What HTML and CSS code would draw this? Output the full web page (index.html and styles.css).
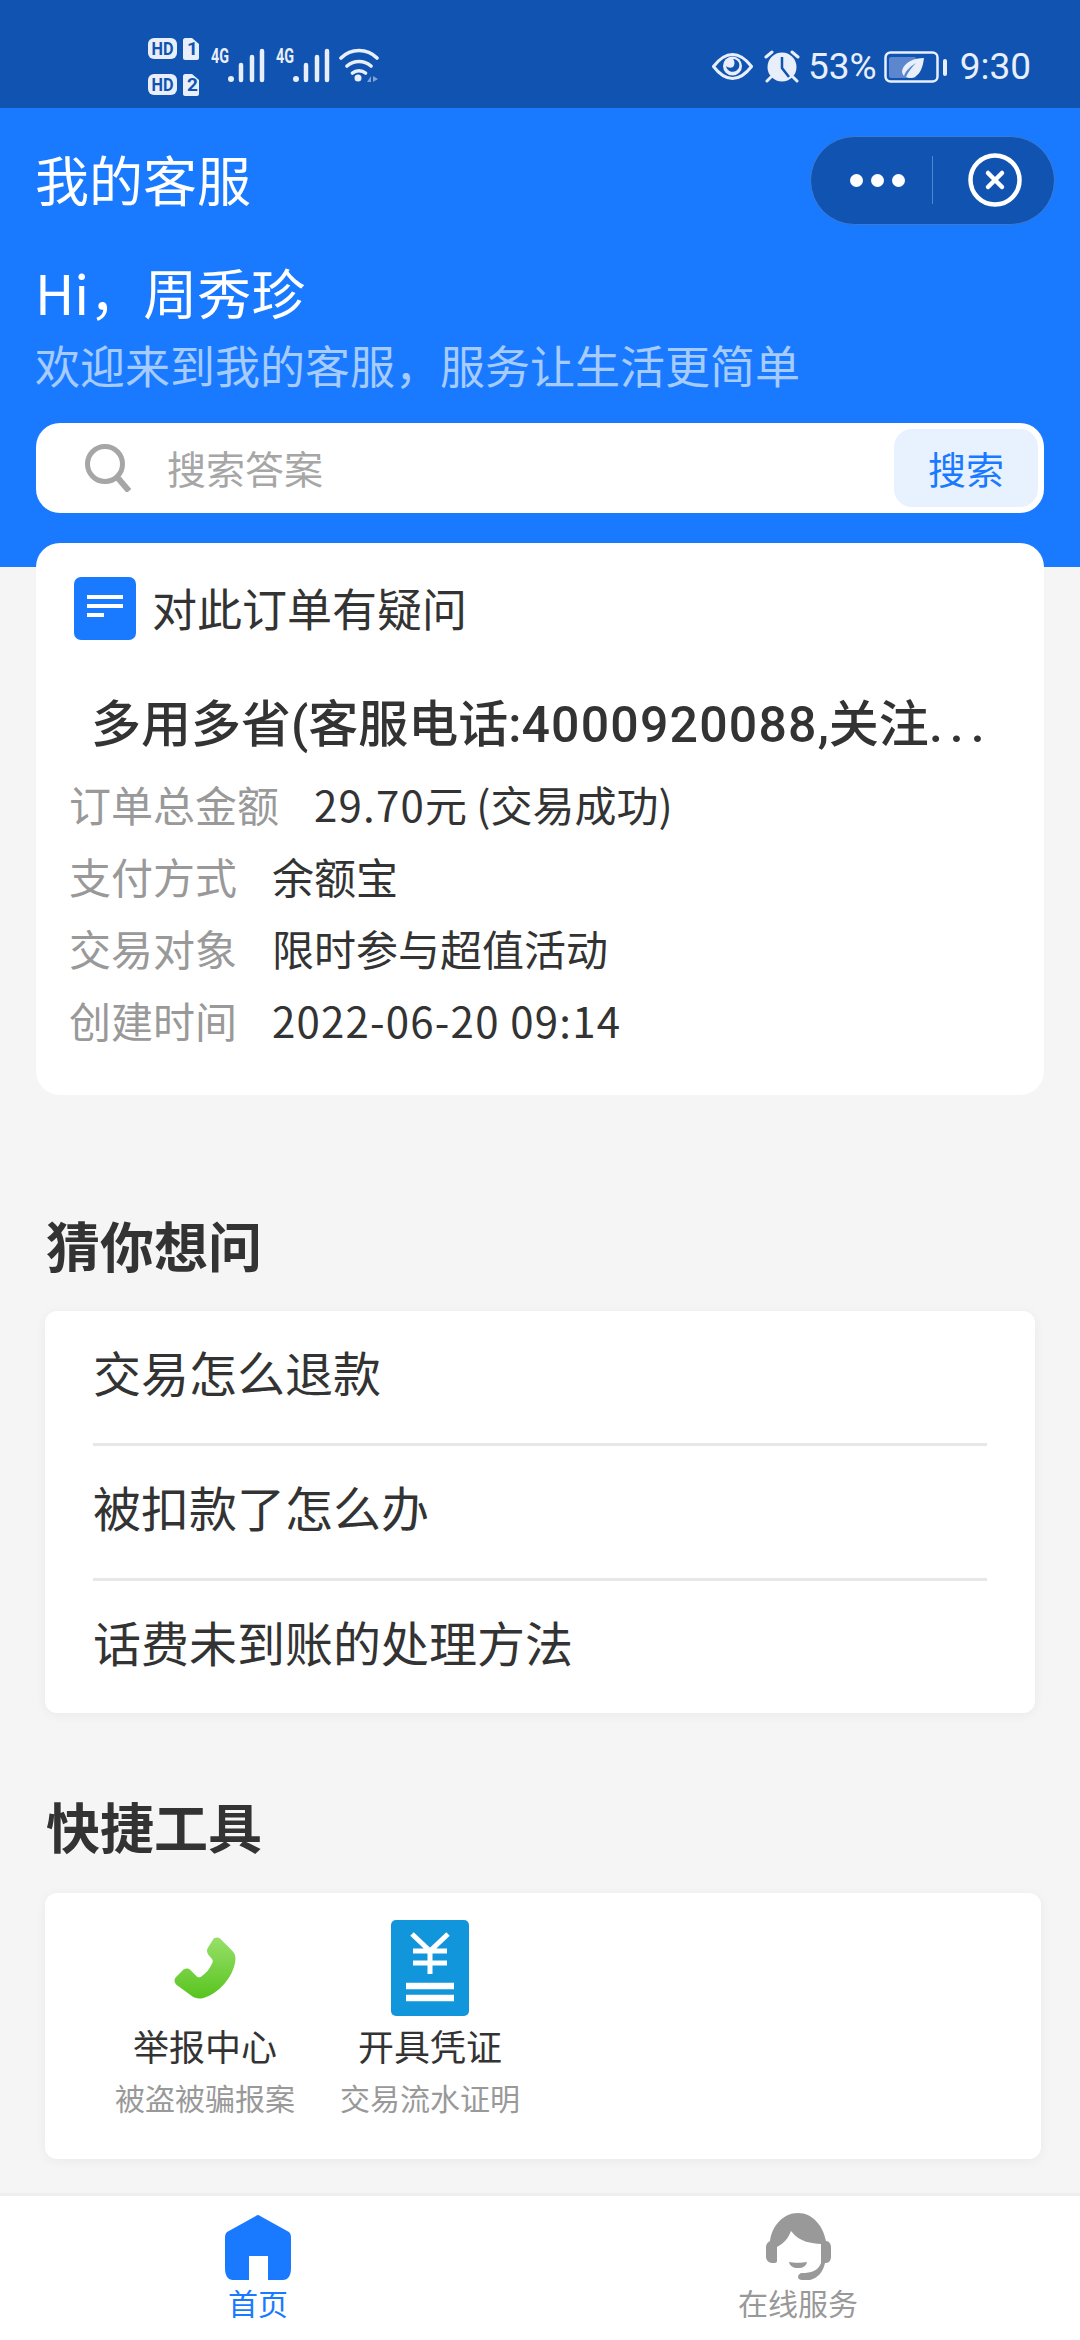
FILE: index.html
```html
<!DOCTYPE html>
<html lang="zh-CN">
<head>
  <meta charset="UTF-8">
  <meta name="viewport" content="width=device-width, initial-scale=1.0">
  <title>我的客服</title>
  <link rel="stylesheet" href="styles.css">
</head>
<body>
<div class="page">
  <div class="status-bar">
    <div class="status-left">
      <svg class="sim-icons" width="52" height="66" viewBox="0 -4 52 66">
        <rect x="0" y="0" width="29" height="21" rx="6" fill="#e8effa"/>
        <text x="3.5" y="16.500" class="sim-text" textLength="22" lengthAdjust="spacingAndGlyphs">HD</text>
        <path d="M37 0h7l7 6v14c0 1-1 2-2 2H37c-1 0-2-1-2-2V2c0-1 1-2 2-2z" fill="#e8effa"/>
        <text x="39" y="17" class="sim-text">1</text>
        <rect x="0" y="36" width="29" height="21" rx="6" fill="#e8effa"/>
        <text x="3.5" y="52.500" class="sim-text" textLength="22" lengthAdjust="spacingAndGlyphs">HD</text>
        <path d="M37 36h7l7 6v14c0 1-1 2-2 2H37c-1 0-2-1-2-2V38c0-1 1-2 2-2z" fill="#e8effa"/>
        <text x="39" y="53" class="sim-text">2</text>
      </svg>
      <svg class="signal" width="55" height="40" viewBox="0 -4 55 40">
        <text x="0" y="15" class="net-text" textLength="18" lengthAdjust="spacingAndGlyphs">4G</text>
        <circle cx="20" cy="31" r="3" fill="#e8effa"/>
        <path d="M30 17v15M41 9v23M51 3v29" stroke="#e8effa" stroke-width="4.500" stroke-linecap="round" fill="none"/>
      </svg>
      <svg class="signal" width="55" height="40" viewBox="0 -4 55 40">
        <text x="0" y="15" class="net-text" textLength="18" lengthAdjust="spacingAndGlyphs">4G</text>
        <circle cx="20" cy="31" r="3" fill="#e8effa"/>
        <path d="M30 17v15M41 9v23M51 3v29" stroke="#e8effa" stroke-width="4.500" stroke-linecap="round" fill="none"/>
      </svg>
      <svg class="wifi" width="42" height="35" viewBox="0 0 42 35">
        <path d="M2 10c10-10 26-10 36 0M8 18c7-6 17-6 24 0M13.500 25c3.500-3 9.500-3 13 0" stroke="#e8effa" stroke-width="3.600" stroke-linecap="round" fill="none"/>
        <circle cx="19" cy="30" r="3.500" fill="#e8effa"/>
        <path d="M32 28v6h-4zM34 28v6l5-3z" fill="#7fa3d8"/>
      </svg>
    </div>
    <div class="status-right">
      <svg class="st-eye" width="41" height="27" viewBox="0 0 41 27">
        <path d="M1.500 13.500C8 5 14 1.500 20.500 1.500S33 5 39.500 13.500C33 22 27 25.500 20.500 25.500S8 22 1.500 13.500z" fill="none" stroke="#e8effa" stroke-width="3"/>
        <circle cx="20.500" cy="13" r="9.500" fill="#e8effa"/>
        <path d="M21 6c2 2 2 6 0 8-2 1-5 1-7-1 1 5 6 7 10 5 3-2 4-5 3-8-1-2-3-4-6-4z" fill="#1153b0"/>
      </svg>
      <svg class="st-alarm" width="36" height="33" viewBox="0 0 36 33">
        <circle cx="18" cy="17" r="14.500" fill="#e8effa"/>
        <path d="M18 7v11l7 9" stroke="#1153b0" stroke-width="2.500" fill="none"/>
        <path d="M2 7l6-5M34 7l-6-5M3 31l4-4M33 31l-4-4" stroke="#e8effa" stroke-width="3" stroke-linecap="round"/>
      </svg>
      <span class="battery-pct">53%</span>
      <svg class="st-battery" width="63" height="32" viewBox="0 0 63 32">
        <rect x="1.500" y="1.500" width="52" height="29" rx="5" fill="none" stroke="#e8effa" stroke-width="2.500"/>
        <rect x="5" y="6" width="27" height="21" rx="2" fill="#5c87cf"/>
        <path d="M40 7C30 7 20 11 18 20c0 2 1 4 2 5 2-6 7-10 12-13-4 4-8 9-10 14 2 1 4 1 6 1 8-2 11-11 12-20z" fill="#e8effa"/>
        <rect x="59" y="8" width="4" height="17" rx="2" fill="#e8effa"/>
      </svg>
      <span class="clock">9:30</span>
    </div>
  </div>

  <div class="hero">
    <div class="title-row">
      <div class="app-title">我的客服</div>
      <div class="capsule">
        <div class="capsule-dots"><i></i><i></i><i></i></div>
        <div class="capsule-line"></div>
        <svg width="54" height="54" viewBox="0 0 54 54">
          <circle cx="27" cy="27" r="24.500" fill="none" stroke="#fff" stroke-width="4.500"/>
          <path d="M20 20l14 14M34 20L20 34" stroke="#fff" stroke-width="4.500" stroke-linecap="round"/>
        </svg>
      </div>
    </div>
    <div class="greeting">Hi，周秀珍</div>
    <div class="welcome">欢迎来到我的客服，服务让生活更简单</div>
    <div class="search-box">
      <svg class="search-icon" width="48" height="48" viewBox="0 0 48 48">
        <circle cx="21" cy="20" r="17.500" fill="none" stroke="#a6a6a6" stroke-width="5"/>
        <path d="M33 33l12 14" stroke="#a6a6a6" stroke-width="6"/>
      </svg>
      <span class="search-hint">搜索答案</span>
      <span class="search-btn">搜索</span>
    </div>
  </div>

  <div class="order-card">
    <div class="order-head">
      <span class="doc-icon"><i class="l1"></i><i class="l1"></i><i class="l2"></i></span>
      <span>对此订单有疑问</span>
    </div>
    <div class="order-name">多用多省(客服电话:<span class="num">4000920088</span>,关注<span class="dots">...</span></div>
    <div class="order-row first"><span class="order-label">订单总金额</span><span><span class="num">29.70</span>元 (交易成功)</span></div>
    <div class="order-row"><span class="order-label">支付方式</span><span>余额宝</span></div>
    <div class="order-row"><span class="order-label">交易对象</span><span>限时参与超值活动</span></div>
    <div class="order-row"><span class="order-label">创建时间</span><span class="num">2022-06-20 09:14</span></div>
  </div>

  <h2 class="section-title ask-title">猜你想问</h2>
  <div class="ask-list">
    <div class="ask-item">交易怎么退款</div>
    <div class="ask-item">被扣款了怎么办</div>
    <div class="ask-item">话费未到账的处理方法</div>
  </div>

  <h2 class="section-title tool-title">快捷工具</h2>
  <div class="tool-card">
    <div class="tool">
      <div class="tool-icon">
        <svg width="62" height="62" viewBox="0 0 78 78">
          <defs>
            <linearGradient id="phone" x1="0" y1="0" x2="0" y2="1">
              <stop offset="0" stop-color="#98e06a"/>
              <stop offset="1" stop-color="#58c41e"/>
            </linearGradient>
          </defs>
          <path d="M50 2c3-2 6-2 8 0l15 15c4 4 5 8 4 14-3 19-20 40-41 46-6 1-10 0-14-3L3 60c-3-3-3-6-1-9l10-10c3-2 6-2 8 0l9 9c2 1 3 1 5 0 6-4 11-10 14-17 1-2 1-3 0-5l-5-6c-2-3-2-6 0-9z" fill="url(#phone)"/>
        </svg>
      </div>
      <div class="tool-name">举报中心</div>
      <div class="tool-desc">被盗被骗报案</div>
    </div>
    <div class="tool">
      <div class="tool-icon">
        <svg width="78" height="96" viewBox="0 0 78 96">
          <rect x="0" y="0" width="78" height="96" rx="5" fill="#1296db"/>
          <path d="M21 14l18 17 18-17M39 31v23M22 31h34M22 43h34" stroke="#fff" stroke-width="5" fill="none"/>
          <path d="M15 66h48M15 78h48" stroke="#fff" stroke-width="6.500"/>
        </svg>
      </div>
      <div class="tool-name">开具凭证</div>
      <div class="tool-desc">交易流水证明</div>
    </div>
  </div>

  <div class="tab-bar">
    <div class="tab active">
      <svg width="66" height="65" viewBox="0 0 66 65">
        <path d="M33 0c1 0 2 .5 3 1.500L64 17c1.500 1.500 2 3 2 6v30c0 8-3 12-8 12H43V41H24v24H8c-5 0-8-4-8-12V23c0-3 .5-4.500 2-6L30 1.500C31 .5 32 0 33 0z" fill="#1a7aff"/>
      </svg>
      <span>首页</span>
    </div>
    <div class="tab">
      <svg width="68" height="67" viewBox="0 0 68 67">
        <path d="M34 0C49 0 59 13 62 28c3 0 5 3 5 6v10c0 3-2 6-5 6h-5V31C48 30 36 30 27 18c-3 8-7 12-14 16v14c0 1-1 2-2 2H8c-3 0-6-3-6-6V34c0-3 2-5 4-6C8 13 19 0 34 0z" fill="#999"/>
        <path d="M25 49c5 1 13 1 18 0-1 4-4 6-9 6s-8-2-9-6z" fill="#999"/>
        <path d="M57 50h4c-2 9-7 15-15 17h-8c-2 0-4-1-4-3s2-4 4-4c9 0 16-2 19-10z" fill="#999"/>
      </svg>
      <span>在线服务</span>
    </div>
  </div>
</div>
</body>
</html>
```

FILE: styles.css
```css
* {
  box-sizing: border-box;
}
html, body {
  margin: 0;
  padding: 0;
}
body {
  font-family: "Noto Sans CJK SC", "Noto Sans", sans-serif;
  background-color: #f5f5f5;
  color: #333;
}
.page {
  width: 1080px;
  height: 2340px;
  overflow: hidden;
  display: flex;
  flex-direction: column;
  position: relative;
}
.status-bar {
  height: 108px;
  background-color: #1153b0;
  display: flex;
  justify-content: space-between;
  color: #e8effa;
  padding: 0 49px 0 148px;
}
.status-left {
  display: flex;
  align-items: flex-start;
  padding-top: 34px;
}
.sim-text {
  font-family: "Roboto", sans-serif;
  font-size: 19px;
  font-weight: 700;
  fill: #1153b0;
}
.net-text {
  font-family: "Roboto", sans-serif;
  font-size: 20px;
  font-weight: 700;
  fill: #e8effa;
}
.sim-icons {
  margin-right: 11px;
}
.signal {
  margin-top: 10px;
  margin-right: 10px;
}
.wifi {
  margin-top: 14px;
  margin-left: -2px;
}
.status-right {
  display: flex;
  align-items: center;
  font-family: "Roboto", sans-serif;
  font-size: 37px;
  padding-top: 25px;
}
.st-alarm {
  margin-left: 11px;
}
.battery-pct {
  margin-left: 8px;
}
.st-battery {
  margin-left: 7px;
}
.clock {
  margin-left: 13px;
}
.hero {
  height: 459px;
  background-color: #1a7aff;
  padding: 0 36px;
  color: #fff;
}
.title-row {
  height: 148px;
  display: flex;
  justify-content: space-between;
  align-items: center;
}
.app-title {
  font-size: 54px;
  line-height: 70px;
  margin: 0 0 6px -1px;
}
.capsule {
  width: 245px;
  height: 89px;
  margin-right: -11px;
  margin-bottom: 4px;
  background-color: #1153b0;
  border: 1px solid #3a7bd6;
  border-radius: 45px;
  display: flex;
  align-items: center;
  padding-left: 39px;
}
.capsule-dots {
  display: flex;
  gap: 8px;
}
.capsule-dots i {
  width: 13px;
  height: 13px;
  border-radius: 50%;
  background-color: #fff;
}
.capsule-line {
  width: 1px;
  height: 48px;
  background-color: #4f86d2;
  margin: 0 35px 0 27px;
}
.greeting {
  font-size: 54px;
  line-height: 70px;
  margin: 1px 0 0 -1px;
}
.welcome {
  font-size: 45px;
  line-height: 60px;
  color: #a5cbff;
  margin: 8px 0 0 -1px;
}
.search-box {
  margin-top: 28px;
  height: 90px;
  background-color: #fff;
  border-radius: 24px;
  display: flex;
  align-items: center;
  padding: 0 6px 0 48px;
}
.search-icon {
  margin-right: 35px;
}
.search-hint {
  flex: 1;
  font-size: 39px;
  color: #a6a6a6;
  padding-bottom: 2px;
}
.search-btn {
  width: 144px;
  height: 78px;
  line-height: 78px;
  text-align: center;
  font-size: 38px;
  color: #1a7aff;
  background-color: #e8f2ff;
  border-radius: 18px;
}
.order-card {
  margin: -24px 36px 0;
  height: 552px;
  background-color: #fff;
  border-radius: 24px;
  position: relative;
  padding: 0 33px;
}
.order-head {
  display: flex;
  align-items: center;
  height: 128px;
  font-size: 45px;
  gap: 16px;
  padding-left: 5px;
}
.doc-icon {
  width: 62px;
  height: 63px;
  margin-top: 2px;
  background-color: #1a7aff;
  border-radius: 7px;
  display: flex;
  flex-direction: column;
  justify-content: center;
  gap: 5px;
  padding: 0 0 5px 13px;
}
.doc-icon i {
  display: block;
  height: 4px;
  background-color: #fff;
}
.doc-icon .l1 {
  width: 36px;
}
.doc-icon .l2 {
  width: 17px;
}
.order-name {
  font-family: "Roboto", "Noto Sans CJK SC", sans-serif;
  font-size: 50px;
  font-weight: 500;
  line-height: 60px;
  margin: 24px 0 0 22px;
  white-space: nowrap;
  color: #333;
}
.order-name .num {
  letter-spacing: 1.2px;
}
.dots {
  letter-spacing: 7px;
}
.order-row {
  height: 72px;
  line-height: 72px;
  font-size: 42px;
  display: flex;
  gap: 35px;
}
.order-row .num {
  letter-spacing: 1.2px;
}
.order-row.first {
  margin-top: 13px;
}
.order-label {
  color: #999;
}
.section-title {
  font-size: 54px;
  font-weight: 700;
  margin: 0 0 0 46px;
  line-height: 70px;
  color: #333;
}
.ask-title {
  margin-top: 115px;
}
.ask-list {
  margin: 31px 45px 0;
  height: 402px;
  background-color: #fff;
  border-radius: 12px;
  box-shadow: 0 2px 12px rgba(0,0,0,0.05);
  padding: 0 48px;
}
.ask-item {
  height: 135px;
  line-height: 120px;
  font-size: 48px;
  border-bottom: 3px solid #e8e8e8;
}
.ask-item:last-child {
  border-bottom: none;
}
.tool-title {
  margin-top: 78px;
}
.tool-card {
  margin: 32px 39px 0 45px;
  height: 266px;
  background-color: #fff;
  border-radius: 12px;
  box-shadow: 0 2px 12px rgba(0,0,0,0.05);
  display: flex;
  padding: 27px 0 0 70px;
  gap: 45px;
}
.tool {
  width: 180px;
  display: flex;
  flex-direction: column;
  align-items: center;
}
.tool-icon {
  height: 96px;
  display: flex;
  align-items: center;
}
.tool-name {
  font-size: 36px;
  line-height: 50px;
  margin-top: 4px;
}
.tool-desc {
  font-size: 30px;
  line-height: 50px;
  margin-top: 2px;
  color: #999;
  white-space: nowrap;
}
.tab-bar {
  position: absolute;
  left: -12px;
  bottom: 0;
  width: 1104px;
  height: 147px;
  background-color: #fff;
  border-top: 3px solid #eee;
  display: flex;
  padding-right: 24px;
}
.tab {
  flex: 1;
  display: flex;
  flex-direction: column;
  align-items: center;
  padding-top: 17px;
  font-size: 30px;
  line-height: 38px;
  color: #999;
}
.tab.active {
  color: #1a7aff;
}
.tab svg {
  margin-bottom: 3px;
}
.tab.active svg {
  margin-top: 2px;
  margin-bottom: 3px;
}
```
